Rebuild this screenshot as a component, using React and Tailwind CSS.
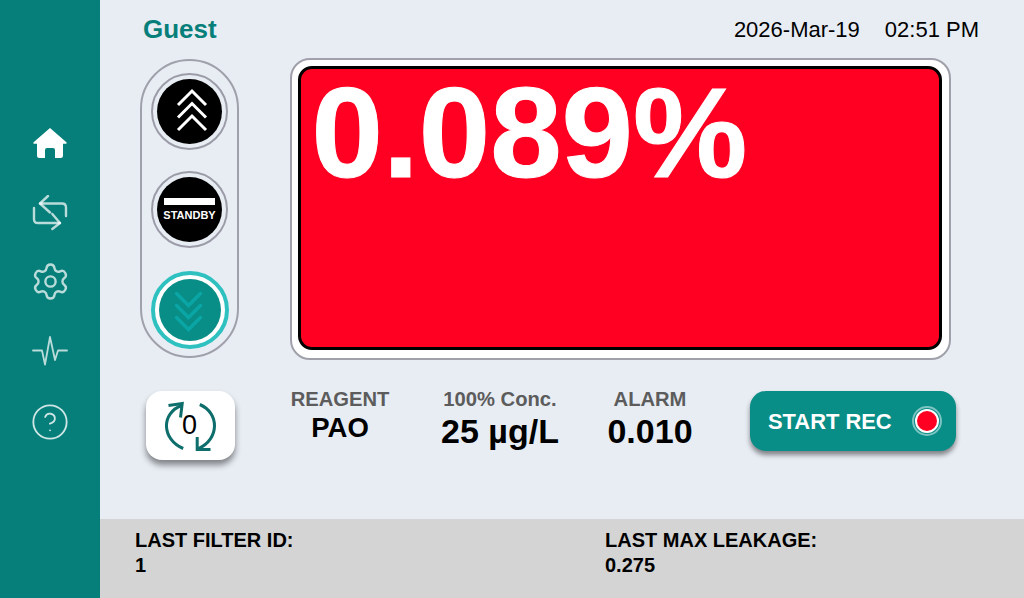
import React from 'react'
import { Settings, CircleHelp } from 'lucide-react'

const HomeIcon = () => (
  <svg width="36" height="32" viewBox="0 0 36 32" fill="#ffffff">
    <path d="M18 1 L34.4 15.2 Q35.4 16.4 34 16.8 L31 16.8 L31 28.5 Q31 31 28.5 31 L23 31 L23 23 Q23 21 21 21 L15 21 Q13 21 13 23 L13 31 L7.5 31 Q5 31 5 28.5 L5 16.8 L2 16.8 Q0.6 16.4 1.6 15.2 Z" />
  </svg>
)

const SwapIcon = () => (
  <svg width="36" height="36" viewBox="0 0 36 36" fill="none" stroke="rgba(255,255,255,0.72)" strokeWidth="2.4" strokeLinecap="round" strokeLinejoin="round">
    <path d="M16 1 L8 8.5 L18 17.5" />
    <path d="M8 8.5 H30 Q34 8.5 34 12.5 V21" />
    <path d="M2 13 V24.2 Q2 28 6 28 H28" />
    <path d="M20.3 19 L28 28 L20.3 34" />
  </svg>
)

const PulseIcon = () => (
  <svg width="36" height="32" viewBox="0 0 36 32" fill="none" stroke="rgba(255,255,255,0.72)" strokeWidth="1.8" strokeLinejoin="round" strokeLinecap="round">
    <path d="M1 15.5 H10 L13 29.5 L18 2 L23 25 L26 15.5 H35" />
  </svg>
)

const ChevronsUp = () => (
  <svg width="40" height="48" viewBox="0 0 40 48" fill="none" stroke="#ffffff" strokeWidth="3" className="ml-[3px] -mt-[2px]">
    <path d="M7 18 L21 4 L35 18" />
    <path d="M7 30.5 L21 16.5 L35 30.5" />
    <path d="M7 43 L21 29 L35 43" />
  </svg>
)

const ChevronsDown = () => (
  <svg width="40" height="48" viewBox="0 0 40 48" fill="none" stroke="#0aa5a5" strokeWidth="3.5" strokeLinecap="round" className="-ml-[2px]">
    <path d="M7.5 7.5 L19.5 19.5 L31.5 7.5" />
    <path d="M7.5 19.5 L19.5 31.5 L31.5 19.5" />
    <path d="M7.5 31.5 L19.5 43.5 L31.5 31.5" />
  </svg>
)

const ZeroIcon = () => (
  <svg width="52" height="50" viewBox="0 0 52 50" fill="none" stroke="#0d6e6c" strokeWidth="3">
    <path d="M18.2 47.5 C-3.8 38 -3.8 12 16.5 4.5" />
    <path d="M3.5 4.5 L17.2 2.5 L15.5 16.5" />
    <path d="M34.8 3.5 C54.6 12 54.6 38 33.5 47.5" />
    <path d="M32.2 36 V48.5 H45.5" />
  </svg>
)

const Stat = ({ label, value, big, width }) => (
  <div className={`flex flex-col items-center ${width}`}>
    <div className="text-[20.2px] leading-[16px] font-bold text-[#5c5c5c]">{label}</div>
    {big ? (
      <div className="mt-[7px] text-[34px] leading-[34px] font-bold text-black">{value}</div>
    ) : (
      <div className="mt-[6px] text-[27.5px] leading-[30px] font-bold text-black">{value}</div>
    )}
  </div>
)

const App = () => {
  return (
    <div className="flex h-[598px] w-[1024px] overflow-hidden bg-[#e8edf4] font-['Liberation_Sans',Arial,sans-serif]">
      {/* Sidebar */}
      <div className="flex w-[100px] shrink-0 flex-col items-center bg-[#067f7a] pt-[108px]">
        <div className="flex h-[70px] items-center justify-center"><HomeIcon /></div>
        <div className="flex h-[69px] items-center justify-center"><SwapIcon /></div>
        <div className="flex h-[69px] items-center justify-center">
          <Settings size={41} strokeWidth={1.4} color="rgba(255,255,255,0.72)" />
        </div>
        <div className="flex h-[70px] items-center justify-center"><PulseIcon /></div>
        <div className="flex h-[71px] items-center justify-center">
          <CircleHelp size={40} strokeWidth={1.1} color="rgba(255,255,255,0.8)" />
        </div>
      </div>

      <div className="flex min-w-0 flex-1 flex-col">
        {/* Header */}
        <div className="flex h-[58px] shrink-0 items-center justify-between pl-[43px] pr-[45px]">
          <div className="text-[26px] font-bold text-[#067f7a]">Guest</div>
          <div className="flex gap-[25px] text-[22px] text-black">
            <span>2026-Mar-19</span>
            <span>02:51 PM</span>
          </div>
        </div>

        {/* Controls + reading */}
        <div className="flex pl-[40px]">
          <div className="mt-[1px] flex h-[299px] w-[99px] flex-col items-center rounded-[50px] border-2 border-[#a0a0ab] pt-[12px]">
            <div className="flex h-[77px] w-[77px] items-center justify-center rounded-full border-2 border-[#9c9ca8]">
              <div className="flex h-[65px] w-[65px] items-center justify-center rounded-full bg-black">
                <ChevronsUp />
              </div>
            </div>
            <div className="mt-[21px] flex h-[77px] w-[77px] items-center justify-center rounded-full border-2 border-[#9c9ca8]">
              <div className="flex h-[65px] w-[65px] flex-col items-center rounded-full bg-black pt-[21px]">
                <div className="h-[7px] w-[51px] bg-white" />
                <div className="mt-[4px] text-[11px] leading-[13px] font-bold text-white">STANDBY</div>
              </div>
            </div>
            <div className="mt-[23px] flex h-[78px] w-[78px] items-center justify-center rounded-full border-4 border-[#2fc0c0] bg-white">
              <div className="flex h-[62px] w-[62px] items-center justify-center rounded-full bg-[#088d87]">
                <ChevronsDown />
              </div>
            </div>
          </div>

          <div className="ml-[51px] h-[302px] w-[661px] rounded-[20px] border-2 border-[#a0a0ab] bg-white py-[6px] pl-[6px] pr-[7px]">
            <div className="h-[284px] rounded-[14px] border-[3px] border-black bg-[#ff0022] pl-[10.5px] text-[128.5px] leading-[128px] font-bold text-white [-webkit-text-stroke:1px_#ffffff]">
              0.089%
            </div>
          </div>
        </div>

        {/* Bottom row */}
        <div className="mt-[31px] flex items-start pl-[46px]">
          <div className="flex h-[69px] w-[89px] items-center justify-center rounded-[16px] bg-white shadow-[0_5px_6px_rgba(0,0,0,0.45)]">
            <div className="relative flex h-[50px] w-[52px] items-center justify-center">
              <ZeroIcon />
              <span className="absolute inset-0 flex items-center justify-center pr-[2px] text-[27px] text-black">0</span>
            </div>
          </div>
          <Stat label="REAGENT" value="PAO" width="ml-[45px] w-[120px]" />
          <Stat label="100% Conc." value="25 µg/L" big width="ml-[30px] w-[140px]" />
          <Stat label="ALARM" value="0.010" big width="ml-[20px] w-[120px]" />
          <div className="ml-[40px] flex h-[60px] w-[206px] items-center justify-between rounded-[16px] bg-[#088d87] pl-[18px] pr-[14px] shadow-[0_4px_5px_rgba(0,0,0,0.45)]">
            <span className="pt-[2px] text-[21.9px] font-bold text-white">START REC</span>
            <div className="flex h-[30px] w-[30px] items-center justify-center rounded-full border-2 border-[#7cc4c1]">
              <div className="h-[24px] w-[24px] rounded-full border-2 border-white bg-[#ff0022]" />
            </div>
          </div>
        </div>

        {/* Footer */}
        <div className="mt-auto flex h-[79px] shrink-0 items-start bg-[#d4d4d4] pl-[35px] pt-[9px] text-[20px] leading-[25px] font-bold text-black">
          <div className="w-[470px]">
            <div>LAST FILTER ID:</div>
            <div>1</div>
          </div>
          <div>
            <div>LAST MAX LEAKAGE:</div>
            <div>0.275</div>
          </div>
        </div>
      </div>
    </div>
  )
}

export default App
